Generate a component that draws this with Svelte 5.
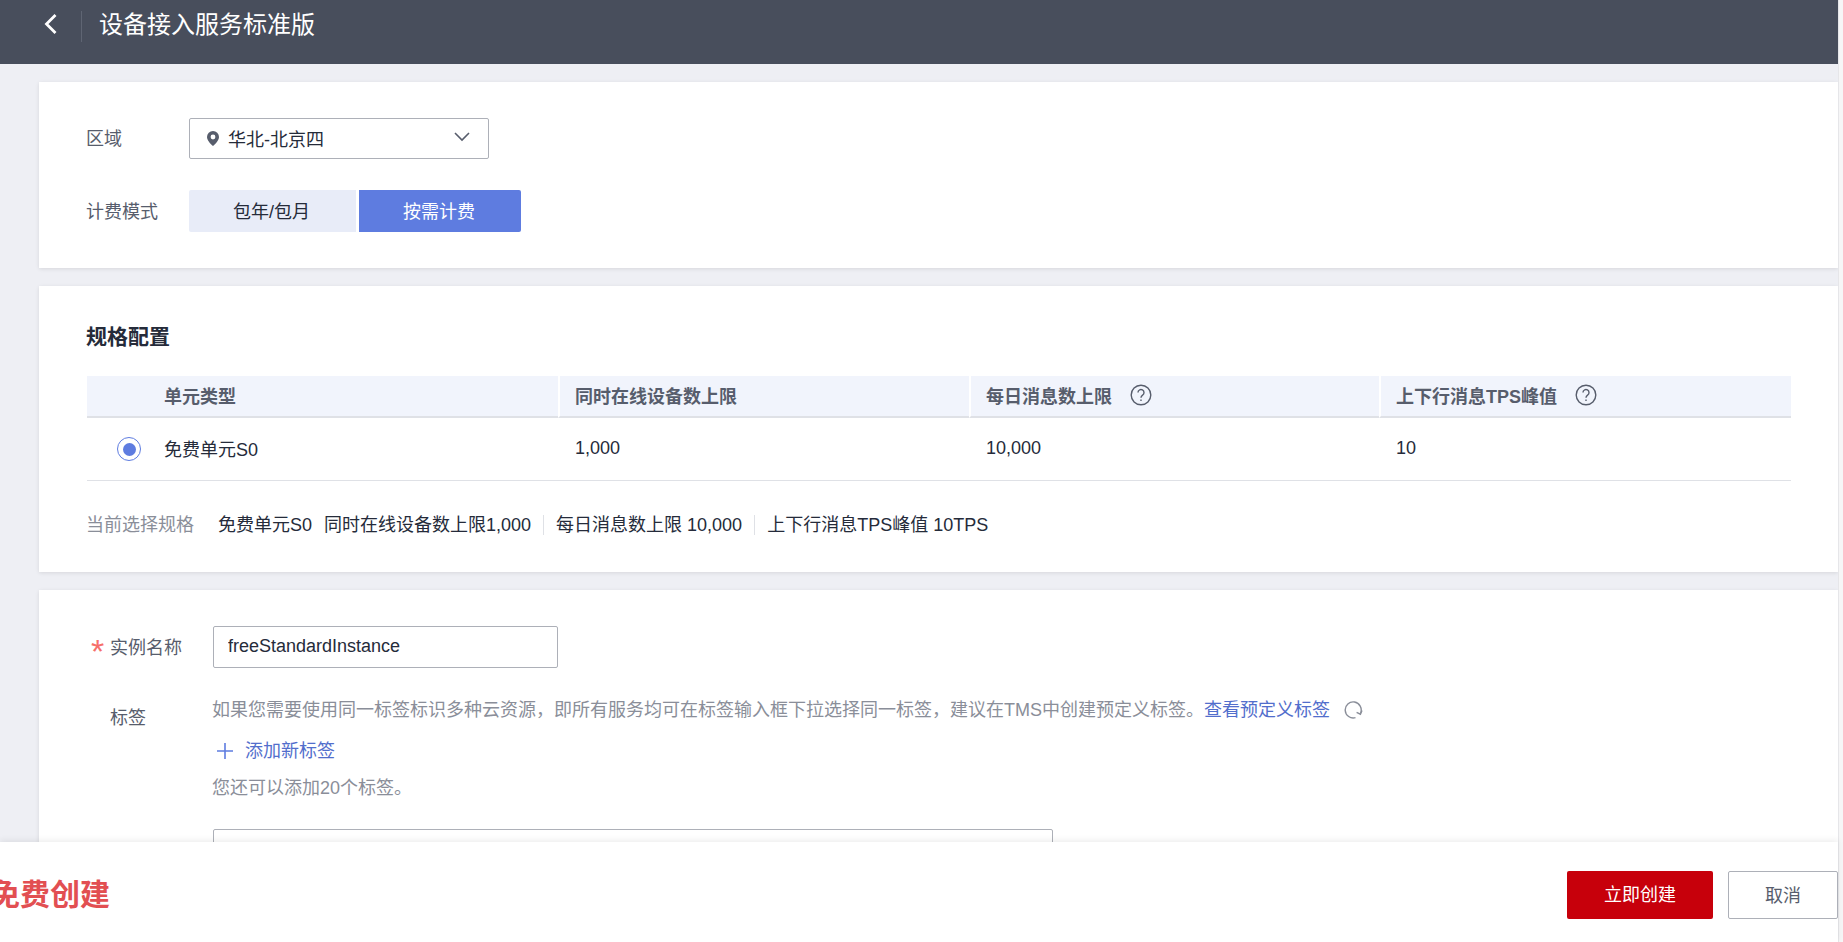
<script>
	const columns = [
		{ title: '单元类型', value: '免费单元S0' },
		{ title: '同时在线设备数上限', value: '1,000' },
		{ title: '每日消息数上限', value: '10,000', help: true },
		{ title: '上下行消息TPS峰值', value: '10', help: true }
	];
</script>

<div class="app">
	<div class="content">
		<header class="topbar">
			<button class="back" aria-label="返回">
				<svg width="14" height="20" viewBox="0 0 14 20" fill="none" stroke="#fff" stroke-width="2.8">
					<path d="M11.5 1 2.5 10l9 9" />
				</svg>
			</button>
			<span class="title">设备接入服务标准版</span>
		</header>

		<main class="main">
			<section class="card first">
				<div class="row">
					<span class="label">区域</span>
					<div class="select">
						<svg class="pin" width="12" height="15" viewBox="0 0 12 15">
							<path fill="#575d6c" fill-rule="evenodd" d="M6 0a6 6 0 0 1 6 6c0 3.4-3.6 7.2-6 9-2.4-1.8-6-5.6-6-9a6 6 0 0 1 6-6Zm0 3.6a2.4 2.4 0 1 0 0 4.8 2.4 2.4 0 0 0 0-4.8Z" />
						</svg>
						<span class="select-text">华北-北京四</span>
						<svg class="chevron" width="16" height="10" viewBox="0 0 16 10" fill="none" stroke="#575d6c" stroke-width="1.6">
							<path d="m1 1 7 7 7-7" />
						</svg>
					</div>
				</div>
				<div class="row mode">
					<span class="label">计费模式</span>
					<div class="tabs">
						<button class="tab">包年/包月</button>
						<button class="tab active">按需计费</button>
					</div>
				</div>
			</section>

			<section class="card spec">
				<h2>规格配置</h2>
				<div class="table">
					{#each columns as col, i}
						<div class="th" class:lead={i === 0}>
							{col.title}
							{#if col.help}
								<svg class="help" width="22" height="22" viewBox="0 0 22 22" fill="none" stroke="#575d6c" stroke-width="1.4">
									<circle cx="11" cy="11" r="9.8" />
									<path d="M8 8.6a3 3 0 1 1 4.6 2.5c-1 .7-1.6 1.2-1.6 2.6" />
									<path d="M11 15.4v1.6" />
								</svg>
							{/if}
						</div>
					{/each}
					{#each columns as col, i}
						<div class="td" class:lead={i === 0}>
							{#if i === 0}
								<span class="radio"><span class="dot"></span></span>
							{/if}
							{col.value}
						</div>
					{/each}
				</div>
				<div class="current">
					<span class="current-label">当前选择规格</span>
					<span class="s0">免费单元S0</span>
					<span>同时在线设备数上限1,000</span>
					<span class="sep"></span>
					<span>每日消息数上限 10,000</span>
					<span class="sep"></span>
					<span>上下行消息TPS峰值 10TPS</span>
				</div>
			</section>

			<section class="card form">
				<div class="row name-row">
					<span class="form-label"><span class="star">*</span>实例名称</span>
					<input class="input" type="text" value="freeStandardInstance" />
				</div>
				<div class="tag-row">
					<span class="form-label tag-label">标签</span>
					<div class="tag-body">
						<div class="hint">
							如果您需要使用同一标签标识多种云资源，即所有服务均可在标签输入框下拉选择同一标签，建议在TMS中创建预定义标签。<span class="link">查看预定义标签</span>
							<svg class="refresh" width="20" height="18" viewBox="0 0 20 18" fill="none" stroke="#8a8e99" stroke-width="1.4">
								<path d="M11.5 16.6A8 8 0 1 1 16.6 12" />
								<path d="m12.6 11.4 3.8 1.8 1.6-3.8" />
							</svg>
						</div>
						<div class="add">
							<svg width="16" height="16" viewBox="0 0 16 16" fill="none" stroke="#5e7ce0" stroke-width="1.6">
								<path d="M8 0v16M0 8h16" />
							</svg>
							<span>添加新标签</span>
						</div>
						<div class="hint remain">您还可以添加20个标签。</div>
					</div>
				</div>
				<div class="cut-input"></div>
			</section>
		</main>

		<footer class="footer">
			<span class="free">免费创建</span>
			<div class="actions">
				<button class="btn-create">立即创建</button>
				<button class="btn-cancel">取消</button>
			</div>
		</footer>
	</div>
	<div class="track"></div>
</div>

<style>
	:global(body) {
		overflow: hidden;
		background: #eeeff4;
	}

	.app {
		display: flex;
		height: 942px;
		overflow: hidden;
		font-family: 'Liberation Sans', 'Noto Sans CJK SC', sans-serif;
		font-size: 18px;
		color: #252b3a;
	}

	button {
		font: inherit;
		cursor: pointer;
	}

	.content {
		flex: 1;
		min-width: 0;
		display: flex;
		flex-direction: column;
	}

	.track {
		width: 5px;
		background: #f6f6f7;
		border-left: 1px solid #e6e6e9;
		box-sizing: border-box;
	}

	.topbar {
		flex: none;
		height: 64px;
		background: #484e5c;
		display: flex;
		align-items: center;
		padding: 0 0 12px 44px;
		box-sizing: border-box;
	}

	.back {
		width: 37px;
		height: 27px;
		padding: 0 0 4px;
		margin-right: 17px;
		background: none;
		border: 0;
		border-right: 1px solid #5f6573;
		text-align: left;
		display: flex;
		align-items: center;
		box-sizing: content-box;
	}

	.title {
		font-size: 24px;
		line-height: 28px;
		padding-bottom: 2px;
		color: #fff;
	}

	.main {
		flex: 1;
		min-height: 0;
		overflow: hidden;
		padding: 18px 0 0 39px;
	}

	.card {
		background: #fff;
		box-shadow: 0 1px 4px rgba(0, 0, 0, 0.1);
		box-sizing: border-box;
		padding-left: 48px;
	}

	.card + .card {
		margin-top: 18px;
	}

	.first {
		height: 186px;
		padding-top: 36px;
	}

	.row {
		display: flex;
		align-items: center;
	}

	.label {
		width: 103px;
		margin-left: -1px;
		padding-bottom: 3px;
		color: #575d6c;
	}

	.select {
		width: 300px;
		height: 41px;
		border: 1px solid #adb0b8;
		border-radius: 2px;
		box-sizing: border-box;
		display: flex;
		align-items: center;
		padding: 0 18px 0 17px;
	}

	.select-text {
		margin-left: 9px;
		padding-bottom: 2px;
		flex: 1;
	}

	.chevron {
		margin-top: -4px;
	}

	.mode {
		margin-top: 31px;
	}

	.tabs {
		display: flex;
		gap: 3px;
	}

	.tab {
		height: 42px;
		width: 167px;
		padding: 0 2px 3px 0;
		border: 0;
		border-radius: 2px 0 0 2px;
		background: #e8ecf8;
		color: #252b3a;
	}

	.tab.active {
		width: 162px;
		border-radius: 0 2px 2px 0;
		background: #5e7ce0;
		color: #fff;
	}

	.spec {
		height: 286px;
		padding-top: 36px;
	}

	h2 {
		margin: 0 0 0 -1px;
		font-size: 21px;
		line-height: 30px;
		font-weight: 700;
		color: #252b3a;
	}

	.table {
		margin-top: 24px;
		width: 1704px;
		display: grid;
		grid-template-columns: 471px 411px 410px 412px;
	}

	.th {
		height: 42px;
		background: #f1f4fc;
		border-bottom: 2px solid #dfe1e6;
		border-left: 2px solid #fff;
		box-sizing: border-box;
		padding: 0 0 2px 15px;
		display: flex;
		align-items: center;
		font-weight: 700;
		color: #575d6c;
	}

	.td {
		height: 63px;
		border-bottom: 1px solid #dfe1e6;
		box-sizing: border-box;
		padding: 0 0 2px 17px;
		display: flex;
		align-items: center;
	}

	.th.lead,
	.td.lead {
		border-left: 0;
		padding-left: 77px;
		position: relative;
	}

	.help {
		margin-left: 18px;
	}

	.radio {
		position: absolute;
		left: 30px;
		top: 19px;
		width: 24px;
		height: 24px;
		border: 1.5px solid #5e7ce0;
		border-radius: 50%;
		box-sizing: border-box;
		display: flex;
		align-items: center;
		justify-content: center;
	}

	.dot {
		width: 13px;
		height: 13px;
		border-radius: 50%;
		background: #5e7ce0;
	}

	.current {
		margin-top: 31px;
		margin-left: -1px;
		display: flex;
		align-items: center;
		line-height: 26px;
	}

	.current-label {
		color: #8a8e99;
		margin-right: 24px;
	}

	.s0 {
		margin-right: 12px;
	}

	.sep {
		width: 1px;
		height: 20px;
		background: #dfe1e6;
		margin: 0 12px;
	}

	.form {
		height: 400px;
		padding-top: 36px;
	}

	.form-label {
		width: 126px;
		padding: 0 0 2px 23px;
		box-sizing: border-box;
		color: #575d6c;
		position: relative;
		white-space: nowrap;
	}

	.star {
		position: absolute;
		left: 4px;
		top: 2px;
		color: #f66f6a;
		font-size: 34px;
		line-height: 32px;
	}

	.input {
		width: 345px;
		height: 42px;
		border: 1px solid #adb0b8;
		border-radius: 2px;
		box-sizing: border-box;
		padding: 0 14px 2px;
		font: inherit;
		color: #252b3a;
		outline: none;
	}

	.tag-row {
		display: flex;
		margin-top: 29px;
	}

	.tag-label {
		padding-top: 8px;
		line-height: 26px;
		height: 34px;
	}

	.tag-body {
		margin-left: -1px;
	}

	.hint {
		color: #8a8e99;
		line-height: 26px;
		display: flex;
		align-items: center;
		white-space: nowrap;
	}

	.link {
		color: #526ecc;
	}

	.refresh {
		margin-left: 14px;
	}

	.add {
		margin-top: 15px;
		display: flex;
		align-items: center;
		gap: 12px;
		padding-left: 5px;
		line-height: 26px;
		color: #526ecc;
	}

	.remain {
		margin-top: 11px;
	}

	.cut-input {
		width: 840px;
		height: 60px;
		margin: 28px 0 0 126px;
		border: 1px solid #adb0b8;
		border-radius: 2px;
		box-sizing: border-box;
	}

	.footer {
		flex: none;
		height: 100px;
		background: #fff;
		box-shadow: 0 -2px 6px rgba(0, 0, 0, 0.07);
		position: relative;
		display: flex;
		align-items: center;
		justify-content: space-between;
	}

	.free {
		margin-left: -10px;
		font-size: 30px;
		font-weight: 700;
		color: #e24f52;
		white-space: nowrap;
	}

	.actions {
		display: flex;
		gap: 15px;
		margin-top: 6px;
	}

	.btn-create {
		width: 146px;
		height: 48px;
		padding: 0 0 4px;
		border: 0;
		border-radius: 2px;
		background: #c7000b;
		color: #fff;
	}

	.btn-cancel {
		width: 110px;
		height: 48px;
		padding: 0 0 3px;
		border: 1px solid #adb0b8;
		border-radius: 2px;
		background: #fff;
		color: #575d6c;
	}
</style>
